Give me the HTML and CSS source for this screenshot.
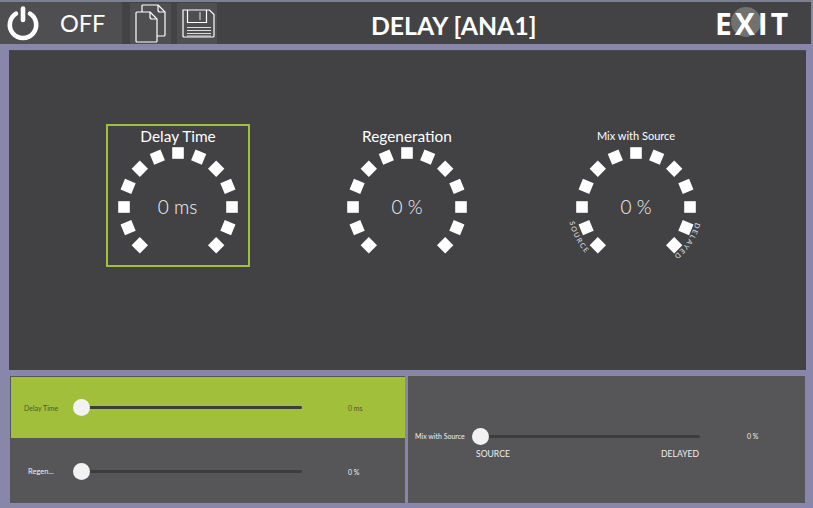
FILE: index.html
```html
<!DOCTYPE html>
<html lang="en">
<head>
<meta charset="utf-8">
<title>Delay</title>
<link rel="stylesheet" href="styles.css">
</head>
<body>
<svg class="defs" width="0" height="0" aria-hidden="true">
  <defs>
    <g id="ring">
      <rect class="dot" x="-5.800" y="-59.800" width="11.600" height="11.600" transform="rotate(-135)"/>
      <rect class="dot" x="-5.800" y="-59.800" width="11.600" height="11.600" transform="rotate(-112.5)"/>
      <rect class="dot" x="-5.800" y="-59.800" width="11.600" height="11.600" transform="rotate(-90)"/>
      <rect class="dot" x="-5.800" y="-59.800" width="11.600" height="11.600" transform="rotate(-67.5)"/>
      <rect class="dot" x="-5.800" y="-59.800" width="11.600" height="11.600" transform="rotate(-45)"/>
      <rect class="dot" x="-5.800" y="-59.800" width="11.600" height="11.600" transform="rotate(-22.5)"/>
      <rect class="dot" x="-5.800" y="-59.800" width="11.600" height="11.600"/>
      <rect class="dot" x="-5.800" y="-59.800" width="11.600" height="11.600" transform="rotate(22.5)"/>
      <rect class="dot" x="-5.800" y="-59.800" width="11.600" height="11.600" transform="rotate(45)"/>
      <rect class="dot" x="-5.800" y="-59.800" width="11.600" height="11.600" transform="rotate(67.5)"/>
      <rect class="dot" x="-5.800" y="-59.800" width="11.600" height="11.600" transform="rotate(90)"/>
      <rect class="dot" x="-5.800" y="-59.800" width="11.600" height="11.600" transform="rotate(112.5)"/>
      <rect class="dot" x="-5.800" y="-59.800" width="11.600" height="11.600" transform="rotate(135)"/>
    </g>
  </defs>
</svg>
<div class="app">
  <header class="topbar">
    <div class="power">
      <svg class="power-icon" width="34" height="36" viewBox="0 0 34 36">
        <path d="M10 8.600 A13.200 13.200 0 1 0 24 8.600" fill="none" stroke="#fff" stroke-width="4.600" stroke-linecap="round"/>
        <path d="M17 3.500 V15" fill="none" stroke="#fff" stroke-width="4.600" stroke-linecap="round"/>
      </svg>
      <span class="off">OFF</span>
    </div>
    <div class="tool tool-copy">
      <svg width="33" height="40" viewBox="0 0 33 40" fill="none" stroke="#fff" stroke-width="1.200" stroke-linejoin="round">
        <path d="M8 8 V2 Q8 1 9 1 H24 L31 8 V31 Q31 32 30 32 H23"/>
        <path d="M24 1 V6 Q24 8 26 8 H31"/>
        <path d="M3 8 H16 L23 15 V37 Q23 38 22 38 H3 Q2 38 2 37 V9 Q2 8 3 8 Z"/>
        <path d="M16 8 V13 Q16 15 18 15 H23"/>
      </svg>
    </div>
    <div class="tool tool-save">
      <svg width="33" height="29" viewBox="0 0 33 29" fill="none" stroke="#fff" stroke-width="1.200">
        <path d="M1 1 H27.500 L32 5.500 V27 Q32 28 31 28 H2 Q1 28 1 27 Z"/>
        <path d="M5.500 1 V13.500 H24.500 V1"/>
        <path d="M18 3 V11" stroke="#cfcfcf"/>
        <path d="M5 18.500 H29 M5 21.500 H29 M5 24.500 H29 M5 27 H29" stroke="#dcdcdc"/>
      </svg>
    </div>
    <h1 class="title">DELAY [ANA1]</h1>
    <div class="exit"><span class="exit-x"></span><span class="exit-text">EXIT</span></div>
  </header>

  <main class="stage">
    <section class="knob knob-active">
      <div class="knob-label">Delay Time</div>
      <svg class="dial" width="130" height="120" viewBox="-65 -65 130 120">
        <use href="#ring"/>
        <text class="dial-value" x="-0.500" y="6.500">0 ms</text>
      </svg>
    </section>
    <section class="knob">
      <div class="knob-label">Regeneration</div>
      <svg class="dial" width="130" height="120" viewBox="-65 -65 130 120">
        <use href="#ring"/>
        <text class="dial-value" x="0" y="6.500">0 %</text>
      </svg>
    </section>
    <section class="knob">
      <div class="knob-label knob-label-small">Mix with Source</div>
      <svg class="dial" width="130" height="120" viewBox="-65 -65 130 120">
        <use href="#ring"/>
        <text class="dial-value" x="0" y="6.500">0 %</text>
        <path id="arc-left" d="M-66.500 15 A68 68 0 0 0 -36 58" fill="none"/>
        <path id="arc-right" d="M59.500 15.500 A61.500 61.500 0 0 1 30 54" fill="none"/>
        <text class="arc-text"><textPath href="#arc-left">SOURCE</textPath></text>
        <text class="arc-text"><textPath href="#arc-right">DELAYED</textPath></text>
      </svg>
    </section>
  </main>

  <footer class="bottom">
    <div class="panel panel-left">
      <div class="row row-active">
        <span class="row-label">Delay Time</span>
        <div class="slider"><span class="thumb"></span></div>
        <span class="row-value">0 ms</span>
      </div>
      <div class="row row-plain">
        <span class="row-label row-label-light">Regen...</span>
        <div class="slider"><span class="thumb"></span></div>
        <span class="row-value row-value-light">0 %</span>
      </div>
    </div>
    <div class="panel panel-right">
      <div class="mix-row">
        <span class="mix-label">Mix with Source</span>
        <div class="slider slider-mix"><span class="thumb"></span></div>
        <span class="row-value row-value-light mix-value">0 %</span>
      </div>
      <div class="mix-ends"><span>SOURCE</span><span>DELAYED</span></div>
    </div>
  </footer>
</div>
</body>
</html>
```
FILE: styles.css
```css
* { box-sizing: border-box; }
html, body { margin: 0; padding: 0; }
body {
  width: 813px;
  height: 508px;
  overflow: hidden;
  background: #8987a9;
  font-family: Lato, "Open Sans", sans-serif;
  color: #fff;
}
.defs { position: absolute; }
.dot { fill: #fff; }
.app { width: 813px; height: 508px; display: flex; flex-direction: column; }

.topbar {
  height: 44px;
  margin: 0 2px 0 0;
  background: #434345;
  display: flex;
  align-items: stretch;
  border-top: 2px solid #7c8090;
  flex: none;
}
.power {
  width: 122px;
  background: #4f4f51;
  display: flex;
  align-items: center;
  padding-left: 6px;
}
.power-icon { flex: none; }
.off {
  margin-left: 20px;
  font-size: 23.500px;
  font-weight: 400;
  line-height: 46px;
}
.tool {
  background: #4f4f51;
  display: flex;
  align-items: center;
  justify-content: center;
  margin-top: 1px;
}
.tool-copy { width: 41px; margin-left: 8px; padding-top: 1px; }
.tool-save { width: 40px; margin-left: 6px; padding-left: 2px; }
.title {
  margin: 0 0 0 154px;
  width: 164px;
  font-size: 24.800px;
  font-weight: 700;
  line-height: 48px;
  white-space: nowrap;
}
.exit {
  margin-left: 180px;
  width: 78px;
  position: relative;
  display: flex;
  align-items: center;
}
.exit-x {
  position: absolute;
  left: 16px;
  top: 5px;
  width: 30px;
  height: 30px;
  border-radius: 50%;
  background: #717170;
}
.exit-text {
  position: relative;
  font-size: 30px;
  font-weight: 700;
  letter-spacing: 3px;
  line-height: 39px;
  font-family: "Open Sans", Lato, sans-serif;
}

.stage {
  margin: 6px 7px 0 9px;
  height: 320px;
  flex: none;
  background: #424244;
  display: flex;
  justify-content: center;
  gap: 85px;
  padding: 73px 1px 0 0;
  border-top: 1px solid #4c4c50;
}
.knob {
  width: 144px;
  height: 143px;
  display: flex;
  flex-direction: column;
  align-items: center;
  border: 2px solid transparent;
}
.knob-active { border-color: #a2bf3c; }
.knob-label {
  font-size: 15.400px;
  line-height: 20px;
  height: 16px;
  white-space: nowrap;
  flex: none;
}
.knob-label-small { font-size: 11px; }
.dial { display: block; flex: none; overflow: visible; }
.dial-value {
  fill: #f4f4f4;
  font-size: 19px;
  font-weight: 300;
  text-anchor: middle;
}
.arc-text {
  fill: #e4e4e4;
  font-size: 7px;
  letter-spacing: 1.500px;
}

.bottom {
  margin: 6px 8px 0 10px;
  height: 127px;
  flex: none;
  display: flex;
  gap: 3px;
}
.panel {
  background: #565658;
  height: 127px;
}
.panel-left { width: 395px; display: flex; flex-direction: column; padding-top: 1px; }
.panel-right { width: 397px; padding-top: 50px; }
.row {
  display: flex;
  align-items: center;
  font-size: 7px;
}
.row-plain { height: 65px; padding-top: 2px; }
.row-active {
  height: 61px;
  margin-left: 1px;
  background: #a2bf3c;
  color: #4e5a24;
}
.row-label {
  width: 62px;
  padding-left: 13px;
  white-space: nowrap;
}
.row-plain .row-label { width: 63px; }
.row-label-light { color: #f0f0f0; padding-left: 18px; font-size: 7.500px; }
.slider {
  width: 220px;
  height: 3px;
  margin-left: 9px;
  background: #3d3d40;
  border-radius: 2px;
  position: relative;
  flex: none;
}
.thumb {
  position: absolute;
  left: -9px;
  top: -7px;
  width: 17px;
  height: 17px;
  border-radius: 50%;
  background: #f2f2f2;
}
.row-value { margin-left: 46px; white-space: nowrap; }
.row-value-light { color: #f0f0f0; }

.mix-row {
  display: flex;
  align-items: center;
  height: 20px;
}
.mix-label {
  font-size: 7px;
  width: 64px;
  padding-left: 7px;
  white-space: nowrap;
  color: #eeeeee;
}
.slider-mix { width: 219px; margin-left: 9px; }
.mix-value { font-size: 7px; margin-left: 47px; }
.mix-ends {
  display: flex;
  justify-content: space-between;
  width: 223px;
  margin: 2px 0 0 68px;
  font-size: 8.600px;
  line-height: 12px;
  color: #eeeeee;
}
```
